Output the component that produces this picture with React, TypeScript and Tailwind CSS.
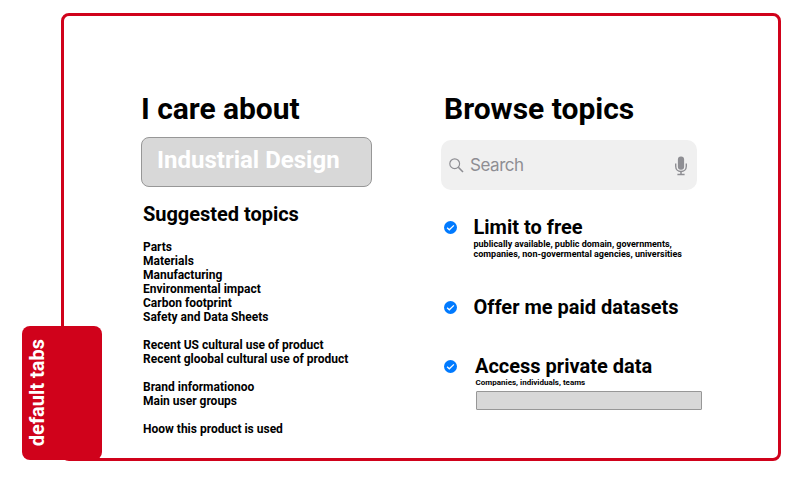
import React from "react";

const topicGroups: string[][] = [
  ["Parts", "Materials", "Manufacturing", "Environmental impact", "Carbon footprint", "Safety and Data Sheets"],
  ["Recent US cultural use of product", "Recent gloobal cultural use of product"],
  ["Brand informationoo", "Main user groups"],
  ["Hoow this product is used"],
];

function CheckBadge() {
  return (
    <svg className="mt-[6px] h-[13px] w-[13px] shrink-0" viewBox="0 0 13 13" fill="none">
      <circle cx="6.5" cy="6.5" r="6.5" fill="#007aff" />
      <path d="M3.1 6.7 5.3 8.8 9.9 4.4" stroke="#fff" strokeWidth="1.25" />
    </svg>
  );
}

function SearchIcon() {
  return (
    <svg className="h-[15px] w-[15px]" viewBox="0 0 15 15" fill="none" stroke="#8e8e93">
      <circle cx="5.7" cy="5.7" r="4.9" strokeWidth="1.15" />
      <path d="M9.3 9.3 14 14" strokeWidth="1.6" />
    </svg>
  );
}

function MicIcon() {
  return (
    <svg className="mt-[1px] h-[20px] w-[12px]" viewBox="0 0 12 20" fill="none">
      <rect x="2.9" y="0.5" width="6.2" height="13.3" rx="3" fill="#8e8e93" />
      <path d="M0.7 7.5V10.3C0.7 13.4 2.9 15.5 6 15.5S11.3 13.4 11.3 10.3V7.5" stroke="#8e8e93" strokeWidth="1.4" />
      <path d="M6 15.5V18.5M2.4 18.5H9.6" stroke="#8e8e93" strokeWidth="1.5" />
    </svg>
  );
}

interface OptionProps {
  title: string;
  className?: string;
  bodyClass: string;
  children?: React.ReactNode;
}

function Option({ title, className = "", bodyClass, children }: OptionProps) {
  return (
    <div className={`flex items-start pl-[3px] ${className}`}>
      <CheckBadge />
      <div className={bodyClass}>
        <h3 className="whitespace-nowrap text-[20px] leading-[24px]">{title}</h3>
        {children}
      </div>
    </div>
  );
}

export default function App() {
  return (
    <div className="relative h-[480px] w-[800px] overflow-hidden bg-white pl-[61px] pt-[13px] font-['Roboto',sans-serif] font-bold text-black">
      <main className="flex h-[448px] w-[720px] rounded-[8px] border-[3px] border-[#d0021b] pl-[77px] pt-[75px]">
        <section className="w-[300px] shrink-0">
          <h1 className="whitespace-nowrap text-[30px] leading-[36px] tracking-[-0.04px]">I care about</h1>
          <div className="mt-[10px] flex h-[50px] w-[231px] rounded-[8px] border border-[#979797] bg-[#d8d8d8] pl-[15px] pt-[8px]">
            <span className="whitespace-nowrap text-[24px] leading-[28px] text-white">Industrial Design</span>
          </div>
          <h2 className="mt-[15px] pl-[2px] text-[20px] leading-[24px] tracking-[-0.03px]">Suggested topics</h2>
          <div className="mt-[14px] flex flex-col gap-[14px] pl-[2px] text-[12px] leading-[14px]">
            {topicGroups.map((group) => (
              <ul key={group[0]}>
                {group.map((topic) => (
                  <li key={topic} className="whitespace-nowrap">{topic}</li>
                ))}
              </ul>
            ))}
          </div>
        </section>

        <section className="w-[270px] shrink-0">
          <h1 className="whitespace-nowrap pl-[3px] text-[30px] leading-[36px]">Browse topics</h1>
          <div className="mt-[13px] flex h-[50px] w-[256px] items-center rounded-[10px] bg-[#f0f0f0] pl-[8px] pr-[10px]">
            <SearchIcon />
            <span className="ml-[6px] flex-1 font-['Inter',sans-serif] text-[17px] leading-[22px] font-normal tracking-[-0.45px] text-[#8e8e93]">
              Search
            </span>
            <MicIcon />
          </div>
          <Option title="Limit to free" className="mt-[25px] h-[80px]" bodyClass="ml-[16.5px]">
            <p className="whitespace-nowrap text-[9px] leading-[10px]">
              publically available, public domain, governments,
              <br />
              companies, non-govermental agencies, universities
            </p>
          </Option>
          <Option title="Offer me paid datasets" className="h-[59px]" bodyClass="ml-[16.5px]" />
          <Option title="Access private data" bodyClass="ml-[18px]">
            <p className="pl-[0.6px] text-[8px] leading-[9px]">Companies, individuals, teams</p>
            <div className="ml-[1px] mt-[4px] h-[19px] w-[226px] rounded-[1px] border border-[#979797] bg-[#d8d8d8]" />
          </Option>
        </section>
      </main>

      <div className="absolute left-[22px] top-[326px] flex h-[134px] w-[80px] rounded-[8px] bg-[#d0021b] pl-[3px]">
        <span className="rotate-180 self-center whitespace-nowrap text-[20px] leading-[24px] text-white [writing-mode:vertical-rl]">
          default tabs
        </span>
      </div>
    </div>
  );
}
